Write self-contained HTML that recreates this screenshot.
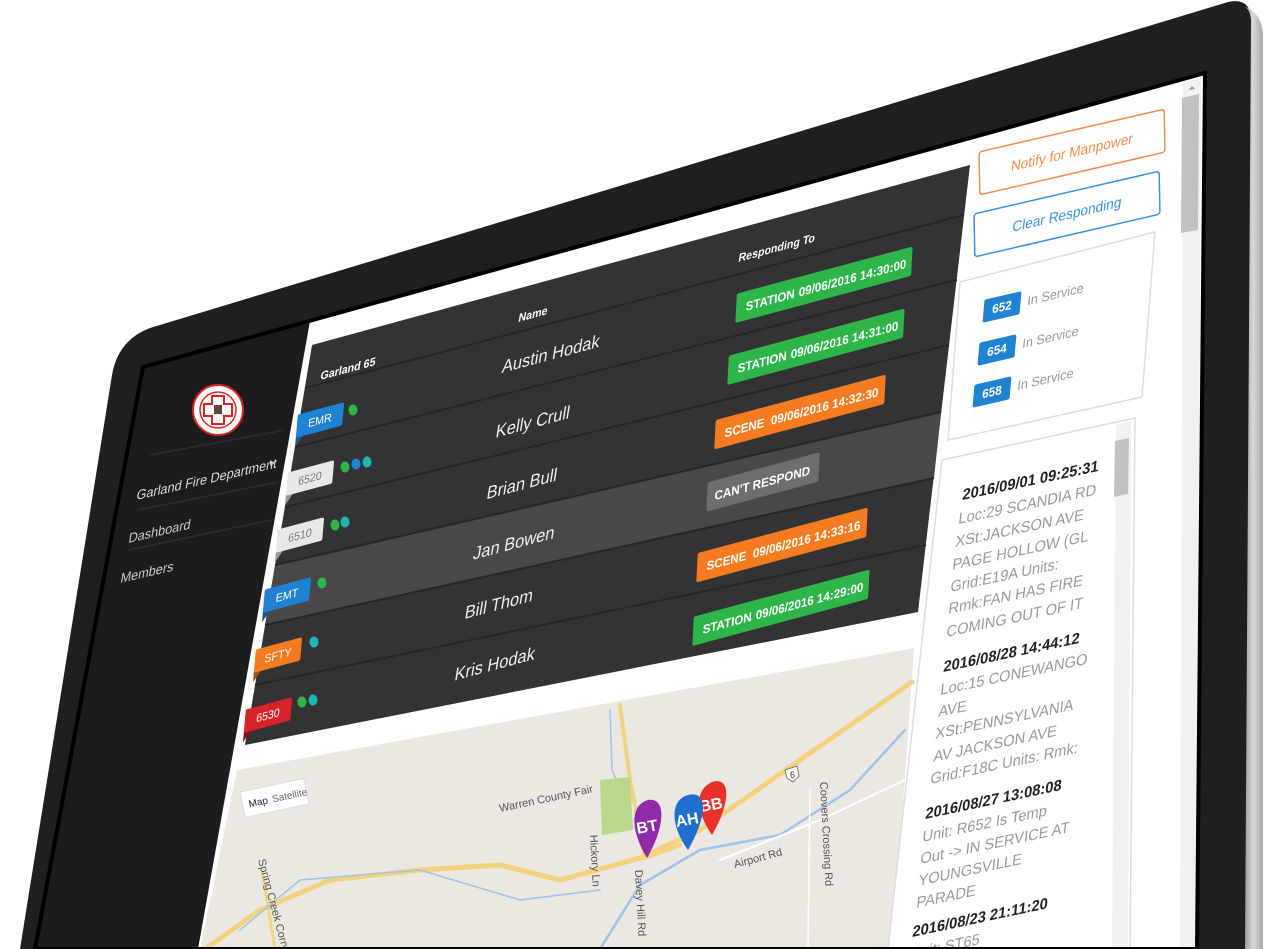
<!DOCTYPE html>
<html><head><meta charset="utf-8"><style>
html,body{margin:0;padding:0;background:#fff;width:1271px;height:949px;overflow:hidden}
svg{display:block;font-family:"Liberation Sans",sans-serif}
</style></head><body>
<svg width="1271" height="949" viewBox="0 0 1271 949" xmlns="http://www.w3.org/2000/svg">
<defs>
<linearGradient id="sil" x1="0" x2="1" y1="0" y2="0"><stop offset="0" stop-color="#8e8e8e"/><stop offset="0.5" stop-color="#d8d8d8"/><stop offset="1" stop-color="#a8a8a8"/></linearGradient>
</defs>
<polygon points="143,367 1205,73 1197,949 35,949" fill="#fff"/>
<polygon points="143,367 310,321 198,949 35,949" fill="#1c1c1e"/>
<line x1="150" y1="455" x2="285" y2="430" stroke="#2c2c2e" stroke-width="1.5"/>
<line x1="138" y1="510" x2="278" y2="482" stroke="#2c2c2e" stroke-width="1.5"/>
<line x1="128" y1="550" x2="272" y2="520" stroke="#2c2c2e" stroke-width="1.5"/>
<circle cx="218" cy="410" r="25" fill="#fff" stroke="#d22" stroke-width="2"/>
<circle cx="218" cy="410" r="18" fill="none" stroke="#d22" stroke-width="1.5"/>
<path d="M212,396 h12 v8 h8 v12 h-8 v8 h-12 v-8 h-8 v-12 h8z" fill="none" stroke="#d22" stroke-width="2"/>
<rect x="214" y="405" width="8" height="9" fill="#643"/>
<path d="M270 460 l5 3 -5 3z" fill="#bbb"/>
<g fill="#ddd" font-size="13">
<text transform="translate(136,500) rotate(-13) skewX(-22)">Garland Fire Department</text>
<text transform="translate(128,543) rotate(-13) skewX(-22)" fill="#ccc">Dashboard</text>
<text transform="translate(120,583) rotate(-13) skewX(-22)" fill="#ccc">Members</text>
</g>
<polygon points="312,345 970,165 918,612 245,745" fill="#333"/>
<polygon points="275,565 941,412 934,478 265,625" fill="#484848"/>
<g stroke="#262626" stroke-width="2">
<line x1="305" y1="388" x2="964" y2="215"/>
<line x1="295" y1="447" x2="957" y2="280"/>
<line x1="285" y1="507" x2="949" y2="345"/>
<line x1="275" y1="565" x2="941" y2="412"/>
<line x1="265" y1="625" x2="934" y2="478"/>
<line x1="255" y1="685" x2="926" y2="545"/>
</g>
<g fill="#fff" font-weight="bold" font-size="11">
<text transform="translate(320,380) rotate(-15) skewX(-24)">Garland 65</text>
<text transform="translate(518,322) rotate(-15) skewX(-24)">Name</text>
<text transform="translate(738,262) rotate(-15) skewX(-24)">Responding To</text>
</g>
<g fill="#eee" font-size="17" text-anchor="middle">
<text transform="translate(550,360) rotate(-15) skewX(-24)">Austin Hodak</text>
<text transform="translate(532,428) rotate(-15) skewX(-24)">Kelly Crull</text>
<text transform="translate(521,490) rotate(-15) skewX(-24)">Brian Bull</text>
<text transform="translate(513,549) rotate(-15) skewX(-24)">Jan Bowen</text>
<text transform="translate(498,610) rotate(-15) skewX(-24)">Bill Thom</text>
<text transform="translate(494,670) rotate(-15) skewX(-24)">Kris Hodak</text>
</g>
<g font-weight="bold" font-size="12" fill="#fff">
<g transform="translate(823,285) rotate(-15) skewX(-18)"><rect x="-90" y="-14" width="182" height="28" rx="2" fill="#2db54a"/><text x="-80" y="5">STATION</text><text x="-25" y="5">09/06/2016 14:30:00</text></g>
<g transform="translate(815,347) rotate(-15) skewX(-18)"><rect x="-90" y="-14" width="182" height="28" rx="2" fill="#2db54a"/><text x="-80" y="5">STATION</text><text x="-25" y="5">09/06/2016 14:31:00</text></g>
<g transform="translate(800,412) rotate(-15) skewX(-18)"><rect x="-88" y="-14" width="176" height="28" rx="2" fill="#f47b20"/><text x="-78" y="5">SCENE</text><text x="-30" y="5">09/06/2016 14:32:30</text></g>
<g transform="translate(763,482) rotate(-15) skewX(-18)"><rect x="-58" y="-14" width="116" height="28" rx="2" fill="#6e6e6e"/><text x="-50" y="5">CAN'T RESPOND</text></g>
<g transform="translate(782,545) rotate(-15) skewX(-18)"><rect x="-88" y="-14" width="176" height="28" rx="2" fill="#f47b20"/><text x="-78" y="5">SCENE</text><text x="-30" y="5">09/06/2016 14:33:16</text></g>
<g transform="translate(780,608) rotate(-15) skewX(-18)"><rect x="-90" y="-14" width="182" height="28" rx="2" fill="#2db54a"/><text x="-80" y="5">STATION</text><text x="-25" y="5">09/06/2016 14:29:00</text></g>
</g>
<g font-size="11" text-anchor="middle">
<g transform="translate(320,420) rotate(-15) skewX(-20)"><polygon points="-24,10 -24,20 -16,10" fill="#155a96"/><rect x="-24" y="-11" width="48" height="22" rx="2" fill="#1f82d2"/><text y="4" fill="#fff">EMR</text></g>
<g transform="translate(310,478) rotate(-15) skewX(-20)"><polygon points="-24,10 -24,20 -16,10" fill="#999"/><rect x="-24" y="-11" width="48" height="22" rx="2" fill="#e8e8e8"/><text y="4" fill="#777">6520</text></g>
<g transform="translate(300,535) rotate(-15) skewX(-20)"><polygon points="-24,10 -24,20 -16,10" fill="#999"/><rect x="-24" y="-11" width="48" height="22" rx="2" fill="#e8e8e8"/><text y="4" fill="#777">6510</text></g>
<g transform="translate(287,595) rotate(-15) skewX(-20)"><polygon points="-24,10 -24,20 -16,10" fill="#155a96"/><rect x="-24" y="-11" width="48" height="22" rx="2" fill="#1f82d2"/><text y="4" fill="#fff">EMT</text></g>
<g transform="translate(278,655) rotate(-15) skewX(-20)"><polygon points="-24,10 -24,20 -16,10" fill="#a34d0c"/><rect x="-24" y="-11" width="48" height="22" rx="2" fill="#f47b20"/><text y="4" fill="#fff">SFTY</text></g>
<g transform="translate(268,715) rotate(-15) skewX(-20)"><polygon points="-24,10 -24,20 -16,10" fill="#8a1515"/><rect x="-24" y="-11" width="48" height="22" rx="2" fill="#d8232a"/><text y="4" fill="#fff">6530</text></g>
</g>
<g>
<ellipse cx="353" cy="410" rx="4.5" ry="5.5" fill="#2db54a"/>
<ellipse cx="345" cy="467" rx="4.5" ry="5.5" fill="#2db54a"/><ellipse cx="356" cy="464" rx="4.5" ry="5.5" fill="#1f82d2"/><ellipse cx="367" cy="462" rx="4.5" ry="5.5" fill="#1fb5b5"/>
<ellipse cx="335" cy="525" rx="4.5" ry="5.5" fill="#2db54a"/><ellipse cx="345" cy="522" rx="4.5" ry="5.5" fill="#1fb5b5"/>
<ellipse cx="322" cy="583" rx="4.5" ry="5.5" fill="#2db54a"/>
<ellipse cx="314" cy="642" rx="4.5" ry="5.5" fill="#1fb5b5"/>
<ellipse cx="302" cy="702" rx="4.5" ry="5.5" fill="#2db54a"/><ellipse cx="313" cy="700" rx="4.5" ry="5.5" fill="#1fb5b5"/>
</g>
<polygon points="237,770 914,648 893,949 200,949" fill="#ebe8e1"/>
<g fill="none" stroke-linecap="round">
<path d="M205,949 L260,910 L330,880 L420,870 L500,865 L560,880 L640,858 L700,830 L800,760 L912,682" stroke="#f4d27e" stroke-width="5"/>
<path d="M620,705 L630,780 L645,858 L680,845" stroke="#f4d27e" stroke-width="4"/>
<path d="M262,870 L275,949" stroke="#f4d27e" stroke-width="3"/>
<path d="M600,949 L640,885 L700,850 L780,835 L850,790 L905,730" stroke="#9ec5ec" stroke-width="2.5"/>
<path d="M240,930 L300,880 L420,870 L520,900 L600,890" stroke="#9ec5ec" stroke-width="1.5"/>
<path d="M610,710 L612,770 L625,800" stroke="#9ec5ec" stroke-width="1.5"/>
<path d="M720,860 L820,820 L905,780" stroke="#fff" stroke-width="2"/>
<path d="M810,790 L808,949" stroke="#fff" stroke-width="1.5"/>
</g>
<polygon points="600,780 630,777 633,830 602,835" fill="#b9d98f"/>
<g fill="#555" font-size="11">
<text transform="translate(500,812) rotate(-12)">Warren County Fair</text>
<text transform="translate(735,868) rotate(-15)">Airport Rd</text>
<text transform="translate(820,782) rotate(87)">Coovers Crossing Rd</text>
<text transform="translate(590,835) rotate(87)">Hickory Ln</text>
<text transform="translate(635,870) rotate(87)">Davey Hill Rd</text>
<text transform="translate(258,860) rotate(75)">Spring Creek Corry Rd</text>
</g>
<path d="M785,770 l12,-4 l2,10 l-6,6 l-6,-4z" fill="#fff" stroke="#777"/>
<text x="790" y="778" font-size="9" fill="#333">6</text>
<g transform="translate(240,792) rotate(-12)"><rect width="65" height="26" fill="#fff" stroke="#ddd"/><text x="6" y="17" font-size="10" fill="#222">Map</text><text x="30" y="17" font-size="10" fill="#666">Satellite</text></g>
<g font-weight="bold" font-size="16" fill="#fff" text-anchor="middle">
<path d="M712,835 C695,810 695,790 712,782 C730,776 732,800 712,835z" fill="#e8312a"/>
<text x="712" y="810" transform="rotate(-10 712 810)">BB</text>
<path d="M688,850 C670,825 670,800 688,795 C708,790 708,815 688,850z" fill="#1f6fcf"/>
<text x="688" y="825" transform="rotate(-10 688 825)">AH</text>
<path d="M647,858 C630,830 630,805 648,800 C666,797 666,825 647,858z" fill="#8f2aa8"/>
<text x="648" y="832" transform="rotate(-10 648 832)">BT</text>
</g>
<g transform="translate(1072,152) rotate(-13) skewX(-12)"><rect x="-95" y="-21" width="190" height="42" rx="3" fill="#fff" stroke="#f58a4b" stroke-width="1.5"/><text text-anchor="middle" y="5" font-size="14" fill="#f58a4b" transform="skewX(-8)">Notify for Manpower</text></g>
<g transform="translate(1067,214) rotate(-13) skewX(-12)"><rect x="-95" y="-21" width="190" height="42" rx="3" fill="#fff" stroke="#3b8fe0" stroke-width="1.5"/><text text-anchor="middle" y="5" font-size="14" fill="#3b8fe0" transform="skewX(-8)">Clear Responding</text></g>
<polygon points="960,282 1155,232 1142,397 948,440" fill="#fff" stroke="#ddd" stroke-width="1.5"/>
<g font-size="13">
<g transform="translate(1002,307) rotate(-13) skewX(-18)"><rect x="-19" y="-11" width="38" height="22" rx="2" fill="#1f82d2"/><text text-anchor="middle" y="4" fill="#fff" font-weight="bold" font-size="12">652</text><text x="26" y="4" fill="#999">In Service</text></g>
<g transform="translate(997,350) rotate(-13) skewX(-18)"><rect x="-19" y="-11" width="38" height="22" rx="2" fill="#1f82d2"/><text text-anchor="middle" y="4" fill="#fff" font-weight="bold" font-size="12">654</text><text x="26" y="4" fill="#999">In Service</text></g>
<g transform="translate(992,392) rotate(-13) skewX(-18)"><rect x="-19" y="-11" width="38" height="22" rx="2" fill="#1f82d2"/><text text-anchor="middle" y="4" fill="#fff" font-weight="bold" font-size="12">658</text><text x="26" y="4" fill="#999">In Service</text></g>
</g>
<polygon points="942,460 1135,418 1130,949 888,949" fill="#fff" stroke="#ddd" stroke-width="1.5"/>
<polygon points="1116,425 1131,421 1128,949 1112,949" fill="#f1f1f1"/>
<polygon points="1115,441 1129,438 1128,494 1114,497" fill="#c1c1c1"/>
<g font-size="15" fill="#999">
<text transform="translate(962,500) rotate(-12) skewX(-18)" fill="#222" font-weight="bold">2016/09/01 09:25:31</text>
<text transform="translate(958,524) rotate(-12) skewX(-18)">Loc:29 SCANDIA RD</text>
<text transform="translate(955,547) rotate(-12) skewX(-18)">XSt:JACKSON AVE</text>
<text transform="translate(952,570) rotate(-12) skewX(-18)">PAGE HOLLOW (GL</text>
<text transform="translate(950,592) rotate(-12) skewX(-18)">Grid:E19A Units:</text>
<text transform="translate(948,614) rotate(-12) skewX(-18)">Rmk:FAN HAS FIRE</text>
<text transform="translate(946,637) rotate(-12) skewX(-18)">COMING OUT OF IT</text>
<text transform="translate(943,672) rotate(-12) skewX(-18)" fill="#222" font-weight="bold">2016/08/28 14:44:12</text>
<text transform="translate(940,695) rotate(-12) skewX(-18)">Loc:15 CONEWANGO</text>
<text transform="translate(938,717) rotate(-12) skewX(-18)">AVE</text>
<text transform="translate(935,739) rotate(-12) skewX(-18)">XSt:PENNSYLVANIA</text>
<text transform="translate(933,762) rotate(-12) skewX(-18)">AV JACKSON AVE</text>
<text transform="translate(930,784) rotate(-12) skewX(-18)">Grid:F18C Units: Rmk:</text>
<text transform="translate(925,819) rotate(-12) skewX(-18)" fill="#222" font-weight="bold">2016/08/27 13:08:08</text>
<text transform="translate(922,842) rotate(-12) skewX(-18)">Unit: R652 Is Temp</text>
<text transform="translate(920,864) rotate(-12) skewX(-18)">Out -&gt; IN SERVICE AT</text>
<text transform="translate(918,886) rotate(-12) skewX(-18)">YOUNGSVILLE</text>
<text transform="translate(916,908) rotate(-12) skewX(-18)">PARADE</text>
<text transform="translate(912,937) rotate(-12) skewX(-18)" fill="#222" font-weight="bold">2016/08/23 21:11:20</text>
<text transform="translate(910,959) rotate(-12) skewX(-18)">Unit: ST65</text>
</g>
<polygon points="1183,82 1201,78 1197,949 1180,949" fill="#f1f1f1"/>
<polygon points="1182,98 1199,94 1198,230 1181,233" fill="#c1c1c1"/>
<path d="M1189,90 l3,-4 l3,3z" fill="#999"/>
<path fill-rule="evenodd" fill="#1f1f1f" d="M150,328 L1228,2 Q1250,-3 1252,20 L1246,949 L20,949 L112,375 Q118,340 150,328 Z M143,367 L1205,73 L1197,949 L35,949 Z"/>
<polygon points="143,367 1205,73 1197,949 35,949" fill="none" stroke="#000" stroke-width="4"/>
<path d="M1243,6 Q1262,12 1263,35 L1263,949 L1245,949 L1251,20 Q1250,8 1243,6z" fill="url(#sil)"/>
</svg>
</body></html>
